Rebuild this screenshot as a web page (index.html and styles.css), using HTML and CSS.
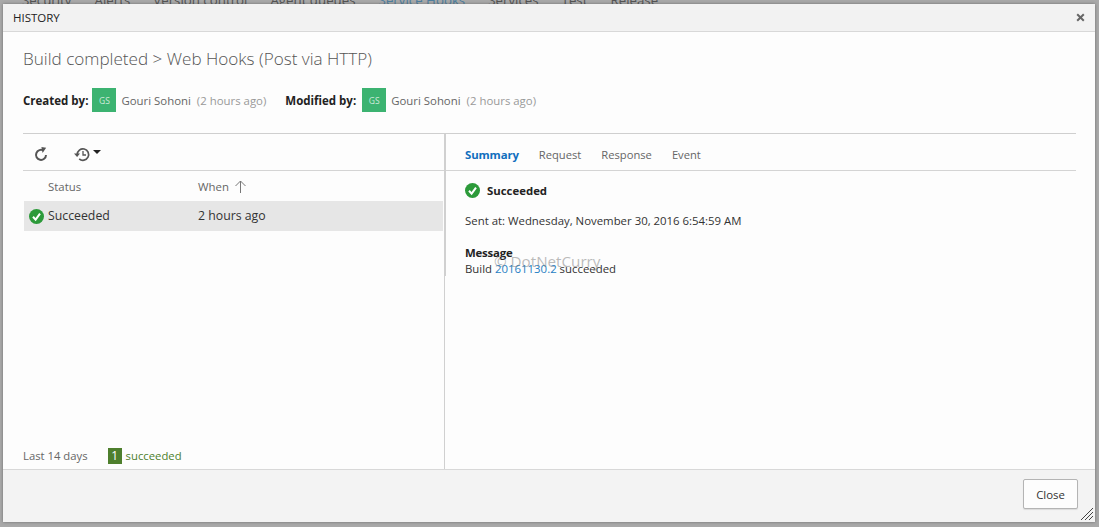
FILE: index.html
```html
<!DOCTYPE html>
<html lang="en">
<head>
<meta charset="utf-8">
<title>History</title>
<link rel="stylesheet" href="styles.css">
</head>
<body>
<nav class="bg-tabs">
  <span>Security</span><span>Alerts</span><span>Version control</span><span>Agent queues</span><span class="bg-active">Service Hooks</span><span>Services</span><span>Test</span><span>Release</span>
</nav>
<div class="dialog">
  <header class="titlebar">
    <span class="title">HISTORY</span>
    <svg class="close-x" width="9" height="9" viewBox="0 0 9 9"><path d="M1.2 1.2 7.8 7.8M7.8 1.2 1.2 7.8" stroke="#666" stroke-width="2"/></svg>
  </header>
  <div class="content">
    <h1 class="heading">Build completed &gt; Web Hooks (Post via HTTP)</h1>
    <div class="meta">
      <b class="meta-label">Created by:</b>
      <span class="avatar">GS</span>
      <span class="person">Gouri Sohoni</span>
      <span class="ago">(2 hours ago)</span>
      <b class="meta-label second">Modified by:</b>
      <span class="avatar">GS</span>
      <span class="person">Gouri Sohoni</span>
      <span class="ago">(2 hours ago)</span>
    </div>
    <div class="split">
      <section class="left">
        <div class="toolbar">
          <svg class="ico-refresh" width="14" height="15" viewBox="0 0 14 15"><path d="M9.6 3.6A5 5 0 1 0 12 8" fill="none" stroke="#555" stroke-width="2"/><path d="M7.4 0 12.2 .8 8.6 6Z" fill="#555"/></svg>
          <svg class="ico-history" width="17" height="15" viewBox="0 0 17 15"><path d="M3.2 7.5a5.7 5.7 0 1 1 2 4.4" fill="none" stroke="#555" stroke-width="1.7"/><path d="M0 6.6h6L3.1 10Z" fill="#555"/><path d="M9 4v4h3" fill="none" stroke="#555" stroke-width="1.3"/></svg>
          <svg class="caret" width="8" height="4" viewBox="0 0 8 4"><path d="M0 0h8L4 4Z" fill="#222"/></svg>
        </div>
        <div class="grid-head">
          <span class="col-status">Status</span>
          <span class="col-when">When
            <svg width="11" height="13" viewBox="0 0 11 13"><path d="M5.5 13V1M.5 6 5.5 1 10.500 6" fill="none" stroke="#777" stroke-width="1"/></svg>
          </span>
        </div>
        <div class="grid-row">
          <svg class="check" width="15" height="15" viewBox="0 0 15 15"><circle cx="7.5" cy="7.5" r="7.5" fill="#2c9a3a"/><path d="M4 7.8 6.6 10.6 11 4.6" fill="none" stroke="#fff" stroke-width="2"/></svg>
          <span class="col-status">Succeeded</span>
          <span class="col-when row-when">2 hours ago</span>
        </div>
        <div class="left-foot">
          <span class="range">Last 14 days</span>
          <span class="count">1</span>
          <span class="count-label">succeeded</span>
        </div>
      </section>
      <section class="right">
        <div class="tabs">
          <span class="tab active">Summary</span><span class="tab">Request</span><span class="tab">Response</span><span class="tab">Event</span>
        </div>
        <div class="detail">
          <div class="status-line">
            <svg width="15" height="15" viewBox="0 0 15 15"><circle cx="7.5" cy="7.5" r="7.5" fill="#2c9a3a"/><path d="M4 7.8 6.6 10.6 11 4.6" fill="none" stroke="#fff" stroke-width="2"/></svg>
            <b>Succeeded</b>
          </div>
          <p class="sent">Sent at: Wednesday, November 30, 2016 6:54:59 AM</p>
          <div class="msg-title">Message</div>
          <div class="msg">Build <a class="link">20161130.2</a> succeeded</div>
        </div>
      </section>
    </div>
  </div>
  <footer class="footer">
    <button class="close-btn">Close</button>
    <svg class="grip" width="12" height="12" viewBox="0 0 12 12"><path d="M0 12 12 0M4 12 12 4M8 12 12 8" stroke="#444" stroke-width="1"/></svg>
  </footer>
  <span class="watermark">© DotNetCurry</span>
</div>
</body>
</html>
```
FILE: styles.css
```css
* { box-sizing: border-box; }
html, body { margin: 0; height: 100%; }
body {
  background: #a9a9a9;
  font-family: "Open Sans", "Noto Sans", sans-serif;
  font-size: 11.4px;
  color: #222;
  overflow: hidden;
  position: relative;
}
.bg-tabs {
  display: flex;
  gap: 23px;
  padding-left: 22px;
  height: 4px;
  line-height: 0;
  font-size: 13.3px;
  color: #555;
  overflow: hidden;
  white-space: nowrap;
  align-items: flex-start;
}
.bg-active { color: #4f7f9f; }
.dialog {
  position: absolute;
  left: 3px;
  top: 4px;
  width: 1092px;
  height: 518px;
  background: #fdfdfd;
  display: flex;
  flex-direction: column;
  box-shadow: 0 0 3px rgba(0,0,0,.35);
}
.titlebar {
  height: 28px;
  flex: none;
  background: #f2f2f2;
  border-bottom: 1px solid #d8d8d8;
  display: flex;
  align-items: center;
  justify-content: space-between;
  padding: 0 10px 0 10px;
}
.title { font-size: 11.5px; color: #222; }
.content {
  flex: 1;
  min-height: 0;
  display: flex;
  flex-direction: column;
  padding: 0 19px 0 20px;
}
.heading {
  margin: 15px 0 0;
  font-size: 17.1px;
  line-height: 24px;
  font-weight: 300;
  color: #555;
}
.meta {
  display: flex;
  align-items: center;
  margin-top: 17px;
  height: 24px;
}
.meta-label { font-weight: 700; color: #222; font-size: 11.5px; }
.meta-label.second { margin: 0 2px 0 19px; }
.avatar {
  width: 24px;
  height: 24px;
  margin: 0 5px 0 4px;
  background: #3cb371;
  color: #cfeadb;
  font-size: 8.5px;
  display: flex;
  align-items: center;
  justify-content: center;
}
.person { color: #666; }
.ago { color: #999; margin-left: 6px; }
.split {
  flex: 1;
  min-height: 0;
  display: flex;
  margin-top: 21px;
  border-top: 1px solid #cfcfcf;
}
.left {
  width: 421px;
  flex: none;
  display: flex;
  flex-direction: column;
}
.toolbar {
  height: 37px;
  flex: none;
  border-bottom: 1px solid #d4d4d4;
  display: flex;
  align-items: center;
  padding: 4px 0 0 11px;
}
.ico-history { margin-left: 26px; }
.caret { margin: 0 0 4px 2px; }
.grid-head {
  height: 30px;
  flex: none;
  display: flex;
  align-items: center;
  color: #666;
}
.col-status { margin-left: 25px; width: 150px; }
.col-when { display: inline-flex; align-items: center; gap: 6px; }
.grid-row {
  height: 30px;
  flex: none;
  margin-left: 1px;
  width: 419px;
  background: #e6e6e6;
  display: flex;
  align-items: center;
  padding-bottom: 1px;
  position: relative;
  font-size: 12.3px;
  color: #333;
}
.grid-row .col-status { margin-left: 24px; }
.check { position: absolute; left: 5px; top: 8px; }
.left-foot {
  margin-top: auto;
  height: 27px;
  display: flex;
  align-items: center;
  color: #666;
  font-size: 11.3px;
}
.count {
  width: 14px;
  height: 16px;
  margin-left: 20px;
  background: #4e7f2d;
  color: #fff;
  display: flex;
  align-items: center;
  justify-content: center;
  font-size: 12px;
}
.count-label { color: #4e7f2d; margin-left: 4px; }
.right {
  flex: 1;
  min-width: 0;
  border-left: 1px solid #d0d0d0;
  display: flex;
  flex-direction: column;
  position: relative;
}
.right::before {
  content: "";
  position: absolute;
  left: 0;
  top: 0;
  width: 1px;
  height: 142px;
  background: #d0d0d0;
}
.tabs {
  height: 37px;
  flex: none;
  border-bottom: 1px solid #d4d4d4;
  display: flex;
  align-items: center;
  gap: 20px;
  padding: 5px 0 0 20px;
  color: #666;
  font-size: 11.2px;
}
.tab.active { color: #106ebe; font-weight: 700; font-size: 11.4px; letter-spacing: -.12px; }
.detail { padding: 12px 0 0 20px; color: #333; }
.status-line { display: flex; align-items: center; gap: 7px; height: 15px; color: #222; }
.sent { margin: 15px 0 0; line-height: 16px; }
.msg-title { margin-top: 16px; font-weight: 700; line-height: 16px; color: #222; letter-spacing: -.2px; }
.msg { line-height: 15px; }
.link { color: #1f7fc4; }
.footer {
  height: 53px;
  flex: none;
  background: #f3f3f3;
  border-top: 1px solid #d8d8d8;
  display: flex;
  align-items: flex-start;
  justify-content: flex-end;
  padding: 9px 17px 0 0;
  position: relative;
}
.close-btn {
  width: 55px;
  height: 30px;
  background: #fdfdfd;
  border: 1px solid #b4b4b4;
  border-radius: 2px;
  font: inherit;
  color: #333;
  box-shadow: 0 1px 1px rgba(0,0,0,.1);
}
.grip { position: absolute; right: 2px; bottom: 2px; }
.watermark {
  position: absolute;
  left: 491px;
  top: 248px;
  font-size: 15.2px;
  line-height: 18px;
  color: rgba(120,120,120,.5);
  pointer-events: none;
}
```
